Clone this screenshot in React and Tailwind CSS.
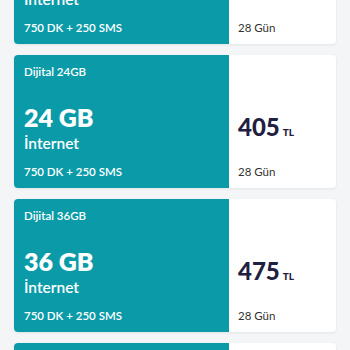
import React from "react";

const packages = [
  { name: "Dijital 12GB", gb: "12 GB", price: "335" },
  { name: "Dijital 24GB", gb: "24 GB", price: "405" },
  { name: "Dijital 36GB", gb: "36 GB", price: "475" },
  { name: "Dijital 48GB", gb: "48 GB", price: "545" },
];

function PackageCard({ pkg }) {
  return (
    <div className="flex h-[133px] shrink-0 overflow-hidden rounded-[4px] bg-white shadow-[0_1px_3px_rgba(0,0,0,0.08)]">
      <div className="flex w-[215px] flex-col bg-[#0b9ba8] pl-[10px] text-white">
        <div className="mt-[10px] text-[11.5px] font-semibold leading-[14px]">
          {pkg.name}
        </div>
        <div className="mt-[24px] text-[25px] font-extrabold leading-[28px]">
          {pkg.gb}
        </div>
        <div className="mt-[2px] text-[15.5px] font-semibold leading-[20px]">
          İnternet
        </div>
        <div className="mb-[9px] mt-auto text-[11.5px] font-semibold leading-[14px]">
          750 DK + 250 SMS
        </div>
      </div>
      <div className="flex flex-1 flex-col pl-[9px]">
        <div className="mt-[58px] flex items-baseline leading-[28px] text-[#1f2040]">
          <span className="text-[24px] font-black">{pkg.price}</span>
          <span className="ml-[3px] text-[10px] font-black">TL</span>
        </div>
        <div className="mb-[9px] mt-auto text-[11.5px] leading-[14px] text-[#333]">
          28 Gün
        </div>
      </div>
    </div>
  );
}

export default function App() {
  return (
    <div
      className="h-[350px] w-[350px] overflow-hidden bg-[#f4f5f7]"
      style={{ fontFamily: "Lato, 'Open Sans', sans-serif" }}
    >
      <div className="-mt-[89px] flex flex-col gap-[11px] px-[14px]">
        {packages.map((p) => (
          <PackageCard key={p.name} pkg={p} />
        ))}
      </div>
    </div>
  );
}
